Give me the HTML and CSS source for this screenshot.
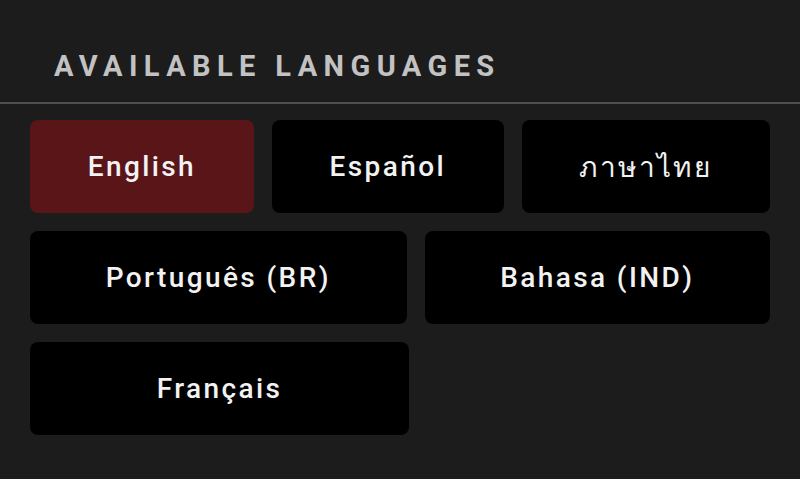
FILE: index.html
```html
<!DOCTYPE html>
<html lang="en">
<head>
  <meta charset="UTF-8" />
  <meta name="viewport" content="width=device-width, initial-scale=1.0" />
  <title>Languages</title>
  <link rel="stylesheet" href="styles.css">
</head>
<body>
  <div class="header">
    <h2>Available Languages</h2>
  </div>

  <div class="lang-list">
    <div class="lang-row">
      <button class="lang active">English</button>
      <button class="lang">Español</button>
      <button class="lang" lang="th">ภาษาไทย</button>
    </div>
    <div class="lang-row">
      <button class="lang">Português (BR)</button>
      <button class="lang">Bahasa (IND)</button>
    </div>
    <div class="lang-row">
      <button class="lang half">Français</button>
    </div>
  </div>
</body>
</html>
```

FILE: styles.css
```css
body {
  margin: 0;
  background: #1c1c1c;
  font-family: Roboto, 'Noto Sans', 'DejaVu Sans', sans-serif;
  color: #f2f2f2;
  height: 100vh;
  overflow: hidden;
}

.header {
  padding: 48px 54px 18px;
  border-bottom: 2px solid #4f4f4f;
}

.header h2 {
  margin: 0;
  font-size: 29px;
  line-height: 36px;
  font-weight: 700;
  text-transform: uppercase;
  letter-spacing: 6.4px;
  color: #c2c2c2;
}

.lang-list {
  display: flex;
  flex-direction: column;
  gap: 18px;
  padding: 16px 30px 0;
}

.lang-row {
  display: flex;
  gap: 18px;
}

.lang {
  flex: 1 1 auto;
  height: 93px;
  padding: 0 20px;
  border: none;
  border-radius: 8px;
  background: #000;
  color: #f2f2f2;
  font-family: inherit;
  font-size: 28px;
  font-weight: 500;
  letter-spacing: 2.4px;
}

.lang.active {
  background: #5a1518;
}

.lang.half {
  flex: 0 0 379px;
}
```
